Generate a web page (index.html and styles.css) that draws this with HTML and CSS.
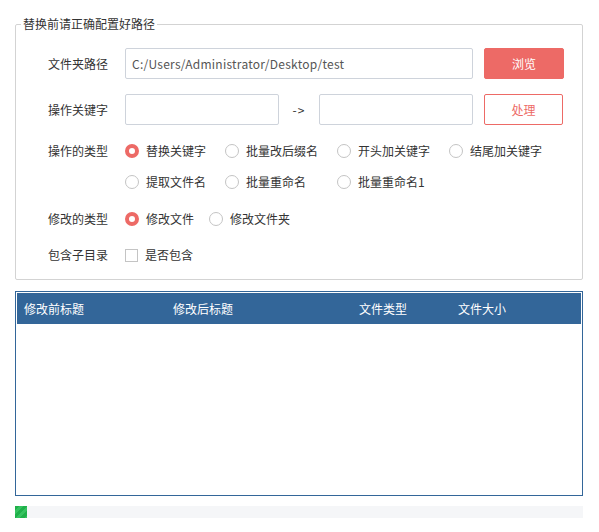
FILE: index.html
```html
<!DOCTYPE html>
<html lang="zh-CN">
<head>
<meta charset="utf-8">
<title>批量重命名</title>
<link rel="stylesheet" href="styles.css">
</head>
<body>
<div class="app">
  <fieldset class="group">
    <legend class="group-title">替换前请正确配置好路径</legend>
    <div class="group-body">
      <div class="row row-input">
        <span class="label">文件夹路径</span>
        <input class="field field-path" type="text" value="C:/Users/Administrator/Desktop/test">
        <button class="btn btn-fill">浏览</button>
      </div>

      <div class="row row-input row-gap">
        <span class="label">操作关键字</span>
        <input class="field field-half" type="text">
        <span class="arrow">-&gt;</span>
        <input class="field field-half" type="text">
        <button class="btn btn-outline">处理</button>
      </div>

      <div class="row row-opt row-first">
        <span class="label">操作的类型</span>
        <div class="opt-grid">
          <label class="opt"><span class="radio checked"></span>替换关键字</label>
          <label class="opt"><span class="radio"></span>批量改后缀名</label>
          <label class="opt"><span class="radio"></span>开头加关键字</label>
          <label class="opt"><span class="radio"></span>结尾加关键字</label>
        </div>
      </div>

      <div class="row row-opt row-tight">
        <span class="label"></span>
        <div class="opt-grid">
          <label class="opt"><span class="radio"></span>提取文件名</label>
          <label class="opt"><span class="radio"></span>批量重命名</label>
          <label class="opt"><span class="radio"></span>批量重命名1</label>
        </div>
      </div>

      <div class="row row-opt row-wide">
        <span class="label">修改的类型</span>
        <div class="opt-flex">
          <label class="opt"><span class="radio checked"></span>修改文件</label>
          <label class="opt"><span class="radio"></span>修改文件夹</label>
        </div>
      </div>

      <div class="row row-opt">
        <span class="label">包含子目录</span>
        <div class="opt-flex">
          <label class="opt"><span class="check"></span>是否包含</label>
        </div>
      </div>
    </div>
  </fieldset>

  <div class="table">
    <div class="thead">
      <span class="th th-1">修改前标题</span>
      <span class="th th-2">修改后标题</span>
      <span class="th th-3">文件类型</span>
      <span class="th th-4">文件大小</span>
    </div>
    <div class="tbody"></div>
  </div>

  <div class="progress"><div class="progress-fill" style="width: 12px"></div></div>
</div>
</body>
</html>
```

FILE: styles.css
```css
* { box-sizing: border-box; }

html, body {
  margin: 0;
  padding: 0;
  background: #ffffff;
}

body {
  font-family: "Noto Sans CJK SC", "Noto Sans", sans-serif;
  font-size: 12px;
  color: #333333;
}

.app {
  padding: 16px 16px 0 15px;
  width: 599px;
  height: 532px;
}

.group {
  margin: 0;
  padding: 0;
  border: 1px solid #d3d3d3;
  border-radius: 2px;
  width: 568px;
  min-inline-size: 0;
}

.group-title {
  margin-left: 5px;
  padding: 0 2px;
  font-size: 12px;
  line-height: 16px;
  color: #333333;
}

.group-body {
  padding: 16px 0 14px 32px;
}

.row {
  display: flex;
  align-items: center;
}

.row-input { height: 31px; }
.row-gap { margin-top: 15px; }

.row-opt { height: 20px; margin-top: 16px; }
.row-first { margin-top: 16px; }
.row-tight { margin-top: 11px; }
.row-wide { margin-top: 17px; }

.label {
  width: 77px;
  flex: none;
  line-height: 20px;
  color: #333333;
}

.field {
  height: 31px;
  border: 1px solid #ced3db;
  border-radius: 2px;
  padding: 0 6px;
  font-family: "Noto Sans CJK SC", "Noto Sans", sans-serif;
  font-size: 12px;
  letter-spacing: 0.25px;
  color: #555555;
  background: #ffffff;
  outline: none;
}

.field-path { width: 348px; }
.field-half { width: 154px; }

.arrow {
  width: 40px;
  text-align: center;
  color: #333333;
  letter-spacing: 1px;
}

.btn {
  margin-left: 11px;
  width: 80px;
  height: 31px;
  border-radius: 2px;
  font-family: "Noto Sans CJK SC", "Noto Sans", sans-serif;
  font-size: 12px;
  padding: 0;
  cursor: pointer;
}

.btn-fill {
  background: #ed6a66;
  border: 1px solid #ed6a66;
  color: #ffffff;
}

.btn-outline {
  background: #ffffff;
  border: 1px solid #ed6a66;
  color: #ed6a66;
  width: 79px;
}

.opt-grid {
  display: grid;
  grid-template-columns: 100px 112px 112px auto;
  align-items: center;
}

.opt-flex {
  display: flex;
  align-items: center;
  gap: 15px;
}

.opt {
  display: flex;
  align-items: center;
  gap: 7px;
  white-space: nowrap;
  line-height: 20px;
  color: #333333;
}

.radio {
  width: 14px;
  height: 14px;
  border-radius: 50%;
  border: 1px solid #c4c4c4;
  background: #ffffff;
  flex: none;
}

.radio.checked {
  border: 4px solid #ed6a66;
}

.check {
  width: 13px;
  height: 13px;
  border: 1px solid #c4c4c4;
  background: #ffffff;
  flex: none;
}

.table {
  margin-top: 11px;
  width: 568px;
  height: 205px;
  border: 1px solid #336699;
  padding: 1px 1px 0 1px;
  display: flex;
  flex-direction: column;
}

.thead {
  height: 31px;
  background: #336699;
  display: flex;
  align-items: center;
  color: #ffffff;
  flex: none;
}

.th { flex: none; }
.th-1 { width: 156px; padding-left: 7px; }
.th-2 { width: 186px; }
.th-3 { width: 99px; }
.th-4 { width: 100px; }

.tbody { flex: 1; }

.progress {
  margin-top: 10px;
  width: 568px;
  height: 12px;
  background: #f5f6f8;
}

.progress-fill {
  height: 12px;
  background: repeating-linear-gradient(135deg, #1fb04a 0 3px, #35c25f 3px 6px);
}
```
